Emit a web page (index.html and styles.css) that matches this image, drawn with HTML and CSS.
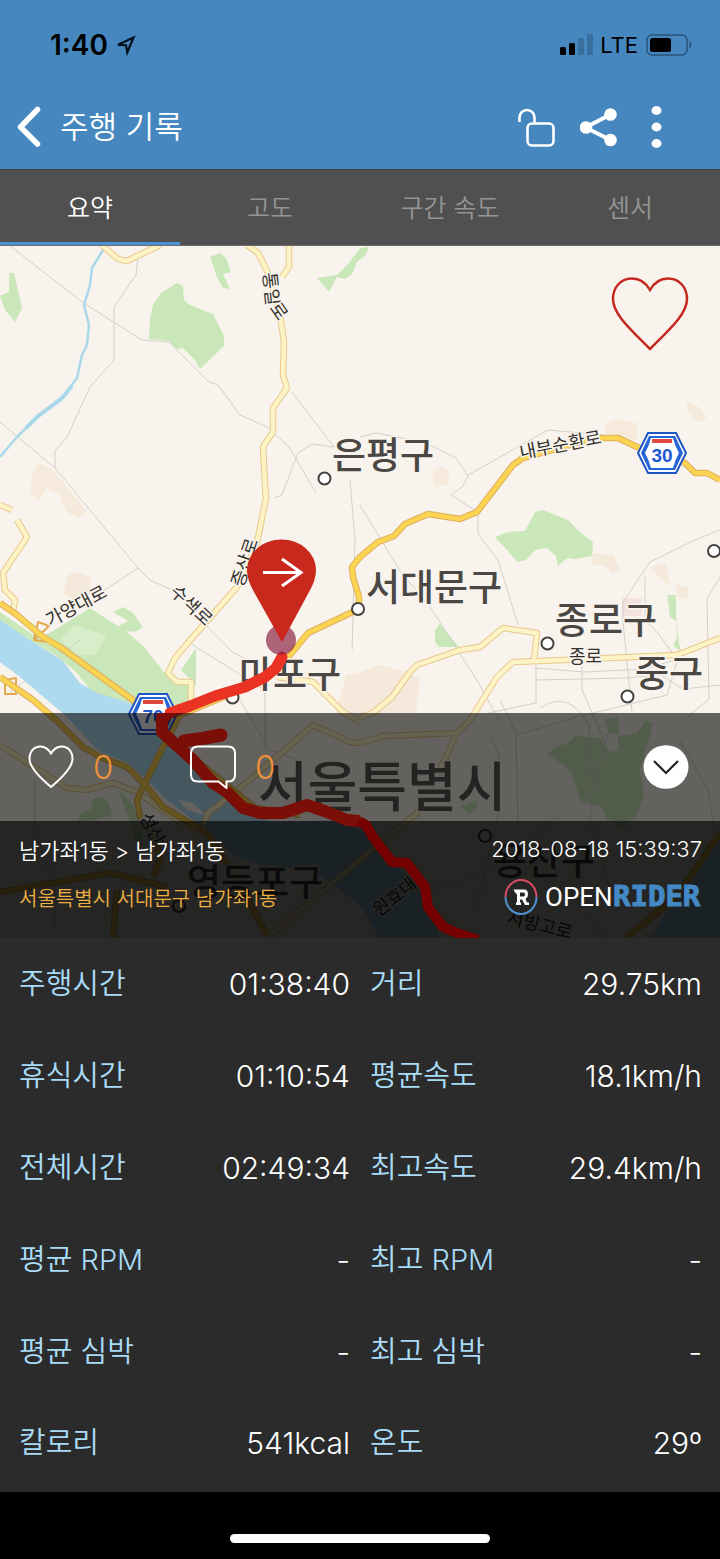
FILE: index.html
```html
<!DOCTYPE html>
<html lang="ko">
<head>
<meta charset="utf-8">
<meta name="viewport" content="width=device-width, initial-scale=1">
<title>주행 기록</title>
<link rel="stylesheet" href="styles.css">
</head>
<body>
<header class="header">
  <div class="status">
    <span class="clock">1:40</span>
    <svg class="locate" width="22" height="22" viewBox="0 0 22 22" aria-hidden="true"><path d="M18.500 3.500 3 10.800l8 .4L12.300 18.500Z" fill="none" stroke="#04101c" stroke-width="2.200" stroke-linejoin="miter"/></svg>
    <span class="grow"></span>
    <svg width="34" height="21" viewBox="0 0 34 21" aria-hidden="true"><rect x="0" y="13" width="6" height="8" rx="1.500"/><rect x="9" y="9" width="6" height="12" rx="1.500"/><rect x="18" y="4" width="6" height="17" rx="1.500" fill="#386f9f"/><rect x="27" y="0" width="6" height="21" rx="1.500" fill="#386f9f"/></svg>
    <span class="carrier">LTE</span>
    <svg width="48" height="22" viewBox="0 0 48 22" aria-hidden="true"><rect x="1" y="1" width="40" height="20" rx="5" fill="none" stroke="#285479" stroke-width="1.500"/><rect x="4" y="4" width="21" height="14" rx="2.500"/><path d="M43.500 7q4 4 0 8Z" fill="#285479"/></svg>
  </div>
  <div class="titlebar">
    <button class="icon-btn" aria-label="뒤로"><svg width="26" height="42" viewBox="0 0 26 42"><path d="M21.500 3.500 4.500 21l17 17" fill="none" stroke="#fff" stroke-width="5.500" stroke-linecap="round" stroke-linejoin="round"/></svg></button>
    <h1 class="title">주행 기록</h1>
    <div class="tools">
      <button class="icon-btn" aria-label="잠금 해제"><svg width="38" height="40" viewBox="0 0 38 40"><path d="M1.500 15V10.500a7.500 7.500 0 0 1 15 0v5" fill="none" stroke="#fff" stroke-width="2.600"/><rect x="9.500" y="16.500" width="26" height="22" rx="4.500" fill="none" stroke="#fff" stroke-width="2.600"/></svg></button>
      <button class="icon-btn" aria-label="공유"><svg width="38" height="40" viewBox="0 0 38 40"><path d="M30.500 7.500 5.500 20.500l25 12.500" fill="none" stroke="#fff" stroke-width="4"/><g fill="#fff"><circle cx="6" cy="20.500" r="6.300"/><circle cx="30.500" cy="7.500" r="6.300"/><circle cx="30.500" cy="33" r="6.300"/></g></svg></button>
      <button class="icon-btn" aria-label="더 보기"><svg width="12" height="42" viewBox="0 0 12 42" fill="#fff"><ellipse cx="6.500" cy="4.500" rx="5" ry="4.400"/><ellipse cx="6.500" cy="21" rx="5" ry="4.400"/><ellipse cx="6.500" cy="37.500" rx="5" ry="4.400"/></svg></button>
    </div>
  </div>
</header>

<nav class="tabs">
  <a class="tab tab-active" href="#summary">요약</a>
  <a class="tab" href="#altitude">고도</a>
  <a class="tab" href="#speed">구간 속도</a>
  <a class="tab" href="#sensor">센서</a>
</nav>

<main>
<section class="map" id="summary">
  <svg class="map-art" viewBox="0 246 720 692" preserveAspectRatio="xMidYMid slice" role="img" aria-label="지도">
    <rect y="246" width="720" height="692" fill="#f8f4ed"/>
    <!-- built-up areas -->
    <g fill="#f5e7d7" opacity=".8">
      <path d="M38 463l14 6 10 12 18 22 7 9-8 7-13-8-7-17-13-6-7 13-9-8 3-22Z"/>
      <path d="M68 575l8-3 16 6-3 16-12 8-14-8Z"/>
      <path d="M605 425l10-6 22 4 1 16-14 4-18-10ZM687 401l12 6 8 12-10 3-9-10ZM432 472l8-6 10 5-3 14-12 2ZM592 553l22 2 6 16-8 2-8-8-12 0ZM650 567l16-4 4 22-10-6ZM676 584l13 4-2 12-9-3Z"/>
      <path d="M360 672l20-7 20 5 20 8-4 35h-80l10-38Z"/>
      <path d="M622 598h20v18h-20Z" fill="#f4dedb"/>
    </g>
    <!-- parks -->
    <g fill="#cae7b9">
      <path d="M177 283l6 3 1 14 6 5 23 9 11 22v10l-24 23-5-9-12-12-6 1-9-8-19-2 1-20 3-14 8-12Z"/>
      <path d="M9 273l5 0 8 35-7 14-10-12-5-14 9-4Z"/>
      <path d="M210 257l10-4 6 5 5 14-8 2 7 15-7-1-6-11Z"/>
      <path d="M360 248l9-1-4 9-8 6-5 12-7 5-8-2-8 15-6-7-6-7 20-3 12-12Z"/>
      <path d="M535 512l8-2 25 10 13 13 12 9-1 14-17 3-8-1-9 8-2-10-9-8-12 2-9 10-9 2-11-13-11-12 13-5 17-1Z"/>
      <path d="M667 595l9 0 0 22 3 26 2 8-8-5 4-9-1-16-6-4Z"/>
      <path d="M435 630l5-6 19 23-20 0-4-5Z"/>
      <path d="M0 612l32 22 16 0 42-26 37 24 17 15 19 24 18 11 15 4v-38l-15 22 12 12v20l-27 13-34-3-39-19-16-20-20-17-39-23-18-12Z"/>
      <path d="M113 612l10-5 10 6 10 14-6 4-12 1-8-5 11-6Z"/>
      <path d="M93 799l9-3 7 7 3 12-14 4-20 4 3-10 9-3Z"/>
      <path d="M118 790q22 14 24 50l-3 14-8-30Z"/>
      <path d="M547 754l10-8 10-2 8-8 25 2 10 14 8-2 0-14 18-2 10-14 7 4-8 28-5 18 4 24-6 18-14 16-17-9-6-13-20-4-9-28-8-9Z"/>
      <path d="M605 719l13-2 1 18-10-2Z"/>
      <path d="M460 807l17-7 0 8-8 6Z"/>
    </g>
    <path d="M60 640l13-15 33 10-10 20-18 0Z" fill="#d8edc9"/>
    <!-- minor roads -->
    <g fill="none" stroke="#d3d0ca" stroke-width="1">
      <path d="M10 246 85 304l57 36 27 2 40 40 9 3 22 30 27 12 22 20 27 46M138 257l-2 18-22 32v53l-24 27-23 50-12 14v18M0 422l55 46 25 30 58 70 12 12 22 10 60 62 20 10M292 392l42 55-22-3-14 9-16 42-8 3M138 568l-35 23M360 505l40 66 30 36 48 75 22 40"/>
      <path d="M360 437l16-4 50 10 30 15 12 18-5 10M468 475l80-45 55 5M463 486l-12 9 27 17v22l20 26 20 65M720 530l-25 10-45 22-27 40 0 20 9 90M645 575v45l12 12 20 27M535 668l50 4 60-3 40-12M536 680l90-2 35-3 22 14 37-4M536 665v38l-48 10M582 655v35l22 50M720 577l-13 22 2 100-24 20M540 708q30-20 50 20l-5 50M500 700l17 35 60-18 90-22 12-40M350 480l5 60-3 110M490 733l10 25v50l-24 100M516 735l2 88M610 890l-20-70 2-30 20-70"/>
      <path d="M35 780l0 50 20 60 0 40M240 700l30 50 30 10M560 880l45 58M680 740l28 50 8 50M80 640l-70 52M185 640l80 50 0 60M395 900l110-33 50-50"/>
    </g>
    <!-- water -->
    <path d="M0 620 25 637 62 660 80 683 97 693 130 703 165 735 233 800 270 822 340 820 368 835 395 862 420 890 440 938H380L360 905 310 868 267 867 233 855 210 833 167 800 147 780 127 763 97 750 67 717 20 677 0 662Z" fill="#addaee"/>
    <path d="M720 840 693 880 667 912 650 938H720Z" fill="#addaee"/>
    <path d="M178 800l15 3 14 13-20-6Z" fill="#f8f4ed"/>
    <path d="M103 250 92 268 90 285 84 305 89 325 87 345 82 355 77 378 62 398 37 417 17 437 0 457" fill="none" stroke="#a9d8ea" stroke-width="2.500"/>
    <path d="M72 386 62 398 37 417 26 428" fill="none" stroke="#a9d8ea" stroke-width="4"/>
    <!-- arterial roads: casing, then fill -->
    <defs>
      <g id="arterial">
        <path d="M247 245 258 253 268 273 280 315 284 342 283 375 287 388 273 408 273 432 263 447 265 485 266 498 257 543 237 587 193 637 175 658 168 673 177 682 191 682V703"/>
        <path d="M289 245V267L282 277M102 245 118 259 127 261 160 245M0 505 12 510M17 520 27 537 3 573 5 590 15 600 13 612"/>
        <path d="M0 745 67 788 87 790 113 783 137 792 167 813 200 833 208 813 240 788 293 743 313 725 350 742 360 743 383 736 457 733 470 720 497 677 513 662 563 660 677 655 720 638"/>
        <path d="M457 733 443 763 417 813 380 843 267 938M360 717 373 713 392 697 410 672 417 665 460 650 480 647 503 628 537 633 534 660M277 677 313 682 343 712 360 722"/>
      </g>
      <g id="express">
        <path d="M720 480 707 473 695 473 685 463 637 447 618 438 600 438 580 442 523 458 513 465 477 512 460 519 428 514 405 524 394 536 378 542 360 557 352 567 353 577 359 597 359 609 308 633 290 655 265 680 180 715 163 747 143 787 137 800 140 817 157 840 160 860 153 877"/>
        <path d="M0 603 17 615 43 637 60 647 133 700 165 735 233 790 255 808 300 815M0 677 33 700 57 721 83 747 100 757 127 767 147 787 163 807 207 833 233 873 267 935M0 892 110 873 167 887M117 890 113 938M720 833 693 873 673 900 627 937"/>
      </g>
    </defs>
    <g fill="none" stroke-linejoin="round">
      <path d="M34 640 49 626 38 622 34 640 48 642M5 680 16 678 16 694 5 694Z" stroke="#e3a94e" stroke-width="2"/>
      <use href="#arterial" stroke="#e9c78e" stroke-width="6.500"/>
      <use href="#arterial" stroke="#fdf4c6" stroke-width="4.500"/>
      <use href="#express" stroke="#dfae5e" stroke-width="6.500"/>
      <use href="#express" stroke="#fbd552" stroke-width="4.500"/>
    </g>
    <!-- place names -->
    <g class="district">
      <text x="332" y="469">은평구</text><text x="366" y="601">서대문구</text><text x="555" y="634">종로구</text>
      <text x="635" y="687">중구</text><text x="239" y="688">마포구</text><text x="187" y="896">영등포구</text><text x="493" y="875">용산구</text>
    </g>
    <text class="city" x="258" y="807">서울특별시</text>
    <g fill="#fff" stroke="#44413e" stroke-width="2">
      <circle cx="324.500" cy="478.500" r="6"/><circle cx="358" cy="609" r="6"/><circle cx="547.500" cy="643.500" r="6"/><circle cx="627.500" cy="696.500" r="6"/><circle cx="714" cy="551" r="6"/><circle cx="232.500" cy="697.500" r="6"/><circle cx="485" cy="836" r="6" fill="none"/><circle cx="179" cy="906" r="6" fill="none"/>
    </g>
    <g class="road-name">
      <text transform="translate(263 273) rotate(84)">통일</text><text transform="translate(269 308) rotate(55)">로</text>
      <text transform="translate(521 459) rotate(-11)">내부순환로</text>
      <text transform="translate(50 627) rotate(-28)">가양대로</text>
      <text transform="translate(169 593) rotate(43)">수색로</text>
      <text transform="translate(243 588) rotate(-72)">증산로</text>
      <text x="569" y="663">종로</text>
      <text transform="translate(139 817) rotate(62)">성산</text>
      <text transform="translate(379 917) rotate(-38)">원효대</text>
      <text transform="translate(506 923) rotate(14)">서빙고로</text>
    </g>
    <!-- highway shields -->
    <g>
      <g transform="translate(662 453)"><path d="M-14-20H14L24 0 14 20H-14L-24 0Z" fill="#fff" stroke="#2055c8" stroke-width="2"/><path d="M-13-17H13L21 0 13 17H-13L-21 0Z" fill="#2563d8"/><path d="M-11-15H11Q13-7 17 0 13 7 11 15H-11Q-13 7-17 0-13-7-11-15Z" fill="#fff"/><path d="M-10-14H10V-10H-10Z" fill="#e0473d"/><text class="shield-no" y="9">30</text></g>
      <g transform="translate(153 714)"><path d="M-14-20H14L24 0 14 20H-14L-24 0Z" fill="#fff" stroke="#2055c8" stroke-width="2"/><path d="M-13-17H13L21 0 13 17H-13L-21 0Z" fill="#2563d8"/><path d="M-11-15H11Q13-7 17 0 13 7 11 15H-11Q-13 7-17 0-13-7-11-15Z" fill="#fff"/><path d="M-10-14H10V-10H-10Z" fill="#e0473d"/><text class="shield-no" y="9">70</text></g>
    </g>
    <!-- ride start -->
    <path d="M282 657 276 668 265 677 245 687 215 696 190 706 170 713" fill="none" stroke="#ea3323" stroke-width="11" stroke-linecap="round" stroke-linejoin="round"/>
    <circle cx="281" cy="640" r="15" fill="#8b1f41" opacity=".68"/>
    <path d="M282 642 254 592Q247 580 247 570A34.500 30.500 0 0 1 316 570Q316 580 309 592Z" fill="#c9281c"/>
    <path d="M263 572.500H300M282 559 301 572.500 282 586" fill="none" stroke="#fff" stroke-width="3"/>
  </svg>
  <svg class="map-art route" viewBox="0 246 720 692" preserveAspectRatio="xMidYMid slice" aria-hidden="true">
    <g fill="none" stroke-linejoin="round">
      <path d="M157 713H176L168 722 167 730 157 730Q155 720 157 713Z" fill="#7b0f07"/>
      <path d="M162 722V732L173 742 193 760 213 783 227 792 243 808 260 813 283 813 307 805 327 812 347 820 360 821" stroke="#7b0f07" stroke-width="12"/>
      <path d="M184 741 205 738 221 735" stroke="#7b0f07" stroke-width="13" stroke-linecap="round"/>
      <path d="M359 821 366 825 373 837 392 862 407 863 425 887 428 907 443 927 460 934 478 940" stroke="#750000" stroke-width="10"/>
    </g>
  </svg>
  <button class="favorite" aria-label="즐겨찾기"><svg width="78" height="76" viewBox="0 0 78 76"><path d="M39 14C34 5 27 2.500 21 2.500 10 2.500 2 11 2 23 2 38 19 53 39 73 59 53 76 38 76 23 76 11 68 2.500 57 2.500 51 2.500 44 5 39 14Z" fill="none" stroke="#c5281f" stroke-width="2.500"/></svg></button>
  <div class="actions">
    <button class="action" aria-label="좋아요 0"><svg width="46" height="44" viewBox="0 0 46 44"><path d="M23 8.500C20 3.500 16 1.500 12.500 1.500 6 1.500 1.500 6.500 1.500 14 1.500 22 10 31 23 42 36 31 44.500 22 44.500 14 44.500 6.500 40 1.500 33.500 1.500 30 1.500 26 3.500 23 8.500Z" fill="none" stroke="#fff" stroke-width="2"/></svg><span class="count">0</span></button>
    <button class="action" aria-label="댓글 0"><svg width="46" height="44" viewBox="0 0 46 44"><path d="M8 1.500H38Q45 1.500 45 8.500V30Q45 36.500 38 36.500H36.500V43L28.500 36.500H8Q1 36.500 1 30V8.500Q1 1.500 8 1.500Z" fill="none" stroke="#fff" stroke-width="2"/></svg><span class="count">0</span></button>
    <span class="grow"></span>
    <button class="collapse" aria-label="접기"><svg width="46" height="44" viewBox="0 0 46 44"><ellipse cx="23" cy="22" rx="22.500" ry="21.800" fill="#fff"/><path d="M11 16 23 28 35 16" fill="none" stroke="#222" stroke-width="2.200"/></svg></button>
  </div>
  <div class="info">
    <div class="info-row"><span class="course">남가좌1동 &gt; 남가좌1동</span><time class="date">2018-08-18 15:39:37</time></div>
    <div class="info-row"><span class="address">서울특별시 서대문구 남가좌1동</span>
      <svg class="logo" width="198" height="38" viewBox="0 0 198 38" role="img" aria-label="OPENRIDER">
        <path d="M1.500 19A15.500 17 0 0 1 32.500 19" fill="none" stroke="#d94b62" stroke-width="2"/>
        <path d="M1.500 19A15.500 17 0 0 0 32.500 19" fill="none" stroke="#4b93d3" stroke-width="2"/>
        <path d="M9.500 11.500H20Q24 11.500 24 16.500 24 19.500 21.500 21L23 24.500H25V27H21L18 21.500H16V24.500H17V27H12V24.500H13V16.500Q10.500 14.500 9.500 11.500ZM16 14.500V18.500H19.500Q21 18.500 21 16.500 21 14.500 19.500 14.500Z" fill="#fff" fill-rule="evenodd"/>
        <text class="logo-open" x="41" y="28">OPEN</text>
        <text class="logo-rider" x="109" y="28">RIDER</text>
      </svg>
    </div>
  </div>
</section>

<table class="stats">
  <tr><th scope="row">주행시간</th><td>01:38:40</td><th scope="row">거리</th><td>29.75km</td></tr>
  <tr><th scope="row">휴식시간</th><td>01:10:54</td><th scope="row">평균속도</th><td>18.1km/h</td></tr>
  <tr><th scope="row">전체시간</th><td>02:49:34</td><th scope="row">최고속도</th><td>29.4km/h</td></tr>
  <tr><th scope="row">평균 RPM</th><td>-</td><th scope="row">최고 RPM</th><td>-</td></tr>
  <tr><th scope="row">평균 심박</th><td>-</td><th scope="row">최고 심박</th><td>-</td></tr>
  <tr><th scope="row">칼로리</th><td>541kcal</td><th scope="row">온도</th><td>29º</td></tr>
</table>
</main>
<footer class="home"><span class="home-bar"></span></footer>
</body>
</html>
```

FILE: styles.css
```css
* { box-sizing: border-box; }
body {
  margin: 0;
  min-height: 100vh;
  display: flex;
  flex-direction: column;
  background: #000;
  color: #fff;
  font-family: Inter, "Noto Sans CJK KR", sans-serif;
}
svg { display: block; flex: none; }
button { margin: 0; padding: 0; border: 0; background: none; color: inherit; font: inherit; }
.grow { flex: 1; }

.header { background: #4687bf; }
.status { display: flex; align-items: center; height: 89px; padding: 0 26px 0 50px; color: #000; }
.clock { font-size: 28px; font-weight: 600; }
.locate { margin-left: 7px; }
.carrier { margin: 0 8px 0 6px; font-size: 22px; font-weight: 400; }
.titlebar { display: flex; align-items: center; height: 80px; padding: 0 58px 4px 16px; }
.title { margin: 0 auto 0 18px; font-size: 31px; line-height: 40px; font-weight: 350; }
.tools { display: flex; align-items: center; gap: 24px; }
.tools .icon-btn:last-child { margin-left: 8px; }

.tabs { display: grid; grid-template-columns: repeat(4, 1fr); height: 77px; background: #505050; border-top: 1px solid #424242; border-bottom: 1px solid #6e6a6a; }
.tab { display: flex; align-items: center; justify-content: center; color: #959595; font-size: 25px; font-weight: 350; text-decoration: none; border-bottom: 3px solid transparent; }
.tab-active { color: #fff; border-bottom-color: #4a90d9; }

.map { position: relative; display: flex; flex-direction: column; min-height: 692px; background: #f8f4ed; overflow: hidden; }
.map-art { position: absolute; inset: 0; width: 100%; height: 100%; }
.route { z-index: 1; }
.district { font-size: 37px; font-weight: 500; fill: #4a4744; }
.city { font-size: 54px; font-weight: 500; fill: #5c5854; }
.road-name { font-size: 18px; fill: #33302c; }
.shield-no { font-family: "Liberation Sans", sans-serif; font-size: 19px; font-weight: 700; fill: #2058cf; text-anchor: middle; }
.district, .city, .road-name { paint-order: stroke; stroke: #f8f4ed; stroke-width: 3px; stroke-linejoin: round; }
.favorite { position: relative; align-self: flex-end; margin: 30px 31px auto 0; }

.actions, .info { position: relative; }
.actions::before, .info::before { content: ""; position: absolute; inset: 0; background: rgba(0, 0, 0, .6); }
.info::before { background: rgba(0, 0, 0, .85); }
.actions > *, .info > * { position: relative; z-index: 2; }
.actions { display: flex; align-items: center; height: 108px; padding: 0 31px 0 28px; }
.action { display: flex; align-items: center; gap: 19px; width: 162px; }
.count { color: #f0923a; font-size: 33px; font-weight: 300; line-height: 40px; }

.info { height: 117px; padding: 9px 18px 0 19px; }
.info-row { display: flex; align-items: center; justify-content: space-between; height: 38px; font-size: 22px; font-weight: 350; }
.info-row + .info-row { margin-top: 10px; }
.date { font-weight: 350; }
.address { color: #eeb043; font-size: 20px; }
.logo-open { font-family: Roboto, sans-serif; font-size: 26px; font-weight: 400; fill: #fff; }
.logo-rider { font-family: "DejaVu Sans Mono", monospace; font-size: 29px; font-weight: 700; fill: #4488c4; stroke: #4488c4; stroke-width: 1px; }

.stats { width: 100%; table-layout: fixed; border-collapse: collapse; background: #2b2b2b; border-bottom: 4px solid #2b2b2b; font-size: 29px; line-height: 40px; }
.stats tr { height: 92px; }
.stats th, .stats td { padding: 0 10px; white-space: nowrap; }
.stats th { text-align: left; font-weight: 350; color: #a9dcf7; }
.stats td { text-align: right; font-size: 30px; font-weight: 350; }
.stats th:first-child { padding-left: 19px; }
.stats td:last-child { padding-right: 18px; }

.home { display: flex; flex: 1; justify-content: center; align-items: flex-end; min-height: 64px; padding-bottom: 16px; background: #000; }
.home-bar { width: 36%; height: 9px; border-radius: 5px; background: #fff; }
```
